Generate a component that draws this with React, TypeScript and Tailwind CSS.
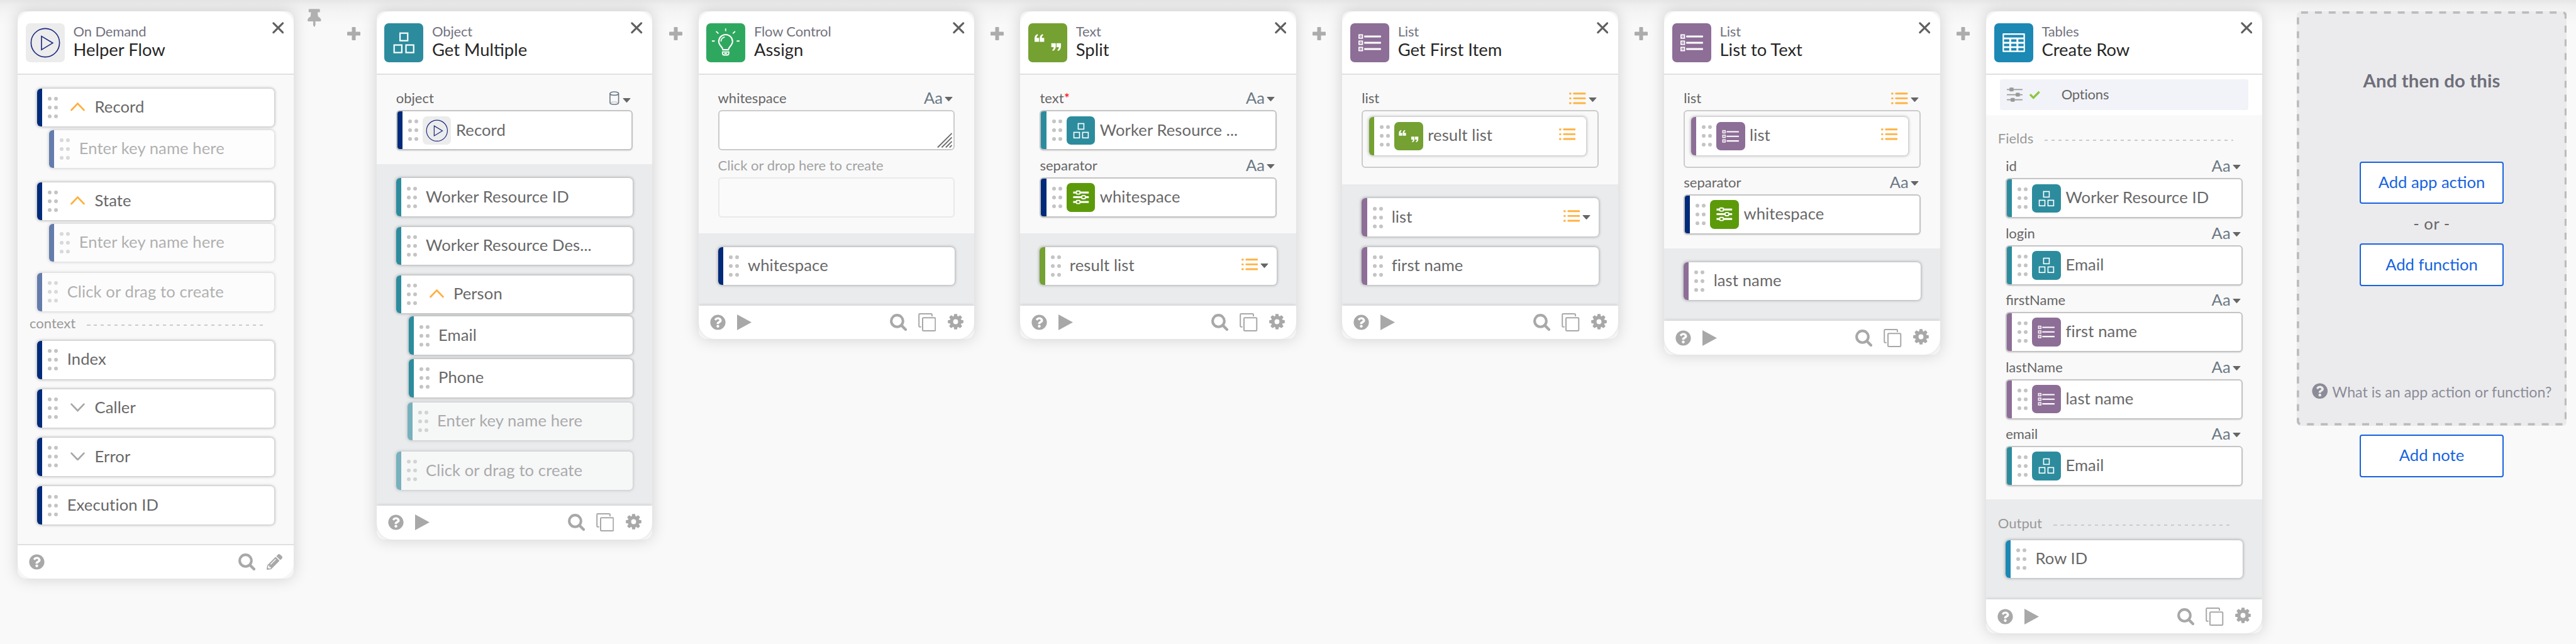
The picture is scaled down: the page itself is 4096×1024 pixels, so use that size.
import React from "react";
import { FaCheck, FaPencilAlt, FaQuestionCircle, FaThumbtack } from "react-icons/fa";

type Tone = "navy" | "teal" | "green" | "purple" | "blue";
type IconName = "play" | "cubes" | "bulb" | "quotes" | "list" | "table" | "sliders";

const barTone: Record<Tone, string> = {
  navy: "bg-[#002a7a]",
  teal: "bg-[#2c8c9e]",
  green: "bg-[#74a132]",
  purple: "bg-[#8d6e97]",
  blue: "bg-[#1c88b4]",
};

const tileTone: Record<IconName, string> = {
  play: "bg-[#ececec]",
  cubes: "bg-[#2c8c9e]",
  bulb: "bg-[#2fa85f]",
  quotes: "bg-[#74a132]",
  list: "bg-[#8d6e97]",
  table: "bg-[#1c88b4]",
  sliders: "bg-[#5c9a0a]",
};

const glyphs: Record<IconName, React.ReactNode> = {
  play: (
    <g fill="none" stroke="#1b2a80" strokeWidth="1.8">
      <circle cx="34" cy="34" r="24.8" />
      <path d="M27.4 22.6v23.6L47 34.4z" />
    </g>
  ),
  cubes: (
    <g fill="none" stroke="#fff" strokeWidth="2.4">
      <rect x="27.5" y="17.2" width="13.4" height="13.2" />
      <rect x="17.2" y="37.9" width="13.4" height="13.2" />
      <rect x="37.9" y="37.9" width="13.4" height="13.2" />
    </g>
  ),
  bulb: (
    <g fill="none" stroke="#fff" strokeWidth="2.3">
      <path d="M29 46.2c0-5-7.2-7.4-7.2-14.4a12 12 0 0 1 24 0c0 7-7.2 9.4-7.2 14.4z" />
      <path d="M25.6 31.8a8.2 8.2 0 0 1 6.6-7.8" strokeWidth="2" />
      <path d="M28.3 50h11v2.4q0 3-3 3h-5q-3 0-3-3zM31.5 52.6h4.6" strokeWidth="2" />
      <path d="M33.8 9v4.8M9.8 31h5M53 31h5M17.2 14.2l4 3.6M50.4 14.2l-4 3.6" strokeWidth="2" />
    </g>
  ),
  quotes: (
    <g fill="#fff">
      <path d="M11 32.4v-5.6q0-6.4 5.2-7.8l1 1.7q-2.5 1.6-2.7 4.9h4.3v6.8zM20 32.4v-5.6q0-6.4 5.2-7.8l1 1.7q-2.5 1.6-2.7 4.9h4.3v6.8z" />
      <path
        transform="rotate(180 34 33.6)"
        d="M11 32.4v-5.6q0-6.4 5.2-7.8l1 1.7q-2.5 1.6-2.7 4.9h4.3v6.8zM20 32.4v-5.6q0-6.4 5.2-7.8l1 1.7q-2.5 1.6-2.7 4.9h4.3v6.8z"
      />
    </g>
  ),
  list: (
    <g>
      {[23.1, 34, 44.9].map((y) => (
        <g key={y}>
          <rect x="15.3" y={y - 2.9} width="6" height="5.8" fill="none" stroke="#fff" strokeWidth="2" />
          <rect x="17.5" y={y - 0.8} width="1.6" height="1.6" fill="#fff" />
          <rect x="24.3" y={y - 1.6} width="29.3" height="3.2" rx=".8" fill="#fff" />
        </g>
      ))}
    </g>
  ),
  table: (
    <g>
      <rect x="14.5" y="17.5" width="39" height="32.7" rx="1.2" fill="#fff" />
      <g fill="#1c88b4">
        <rect x="17" y="20.2" width="33.9" height="4.6" />
        {[28, 35.7, 43.2].map((y) =>
          [17, 29.5, 42].map((x) => <rect key={`${x}-${y}`} x={x} y={y} width="9.2" height="4.4" />),
        )}
      </g>
    </g>
  ),
  sliders: (
    <g>
      {[
        [22.6, 27.4],
        [33.6, 40.2],
        [45, 27.4],
      ].map(([y, x]) => (
        <g key={y}>
          <rect x="15.5" y={y - 2.3} width="37" height="4.6" fill="#fff" />
          <rect x={x - 4.2} y={y - 3.6} width="8.4" height="7.2" rx="1.5" fill="#5c9a0a" stroke="#fff" strokeWidth="2.8" />
        </g>
      ))}
    </g>
  ),
};

function Tile({ name, big = false }: { name: IconName; big?: boolean }) {
  return (
    <div className={`shrink-0 rounded-[7px] ${tileTone[name]} ${big ? "size-[62px]" : "size-[45.6px]"}`}>
      <svg viewBox="0 0 68 68" className="size-full">
        {glyphs[name]}
      </svg>
    </div>
  );
}

function Caret({ className = "" }: { className?: string }) {
  return (
    <svg viewBox="0 0 14 8" className={`h-[7px] w-[13px] shrink-0 ${className}`}>
      <path d="M0 .6Q0 0 .8 0h12.4q.8 0 .8.6L7.6 7.6q-.6.6-1.2 0z" fill="#666" />
    </svg>
  );
}

function ListGlyph({ className = "" }: { className?: string }) {
  return (
    <svg viewBox="0 0 29 20" className={`h-[19px] w-[26.5px] shrink-0 ${className}`} fill="#ffb244">
      {[0, 8.3, 16.6].map((y) => (
        <g key={y}>
          <rect x="0" y={y} width="4" height="3.4" rx="1.6" />
          <rect x="7" y={y} width="22" height="3.2" rx="1.4" />
        </g>
      ))}
    </svg>
  );
}

function Database({ className = "" }: { className?: string }) {
  return (
    <svg viewBox="0 0 17 24" className={`h-[22px] w-[15.5px] shrink-0 ${className}`} fill="none" stroke="#6b7885" strokeWidth="1.8">
      <ellipse cx="8.5" cy="4" rx="7.5" ry="3" />
      <path d="M1 4v16q0 3 7.5 3t7.5-3V4" />
      <path d="M2.5 19.5q6-1.8 12 0" strokeWidth="1" strokeDasharray="1.5 1" />
    </svg>
  );
}

function Dots() {
  return (
    <div className="grid shrink-0 grid-cols-2 gap-x-1 gap-y-2">
      {[0, 1, 2, 3, 4, 5].map((i) => (
        <span key={i} className="size-1.5 rounded-full bg-[#c4c4c4]" />
      ))}
    </div>
  );
}

function Chevron({ up }: { up: boolean }) {
  return (
    <svg viewBox="0 0 25 15" className="mt-[-2px] ml-[20px] h-[13.7px] w-[23px] shrink-0" fill="none" strokeWidth="3" strokeLinecap="round">
      {up ? <path d="M1.6 13.2L12.5 1.8 23.4 13.2" stroke="#ffb03f" /> : <path d="M1.6 1.8L12.5 13.2 23.4 1.8" stroke="#a8a8a8" />}
    </svg>
  );
}

type ChipProps = {
  tone: Tone;
  text: string;
  icon?: IconName;
  chevron?: "up" | "down";
  ghost?: boolean;
  boxed?: boolean;
  trailing?: React.ReactNode;
  className?: string;
};

function Chip({ tone, text, icon, chevron, ghost, boxed, trailing, className = "" }: ChipProps) {
  const frame = boxed
    ? "h-[64px] border-2 border-[#c4c4c4] shadow-[0_1px_2px_rgba(0,0,0,0.12)]"
    : "h-[60.6px] shadow-[0_0_4px_1px_rgba(0,0,0,0.27)]";
  const gap = icon ? "ml-[7.5px]" : chevron ? "ml-[15px]" : "ml-[14.2px]";
  return (
    <div
      className={`flex shrink-0 items-center overflow-hidden rounded-[6px] bg-white text-[25.6px] tracking-[0.1px] text-[#686868] ${frame} ${ghost ? "opacity-60" : ""} ${className}`}
    >
      <div className={`w-[8.2px] shrink-0 self-stretch ${barTone[tone]}`} />
      <div className="ml-[9px]">
        <Dots />
      </div>
      {icon && (
        <div className="ml-[7px]">
          <Tile name={icon} />
        </div>
      )}
      {chevron && <Chevron up={chevron === "up"} />}
      <span className={`grow pb-[3.4px] whitespace-nowrap ${gap} ${ghost ? "text-[#808080]" : ""}`}>{text}</span>
      {trailing}
    </div>
  );
}

function ListMenu({ className = "" }: { className?: string }) {
  return (
    <div className={`flex items-end ${className}`}>
      <ListGlyph />
      <Caret className="mb-[4px] ml-[4px]" />
    </div>
  );
}

function FieldLabel({ text, kind, required, muted }: { text: string; kind?: "text" | "list" | "db"; required?: boolean; muted?: boolean }) {
  return (
    <div className="flex h-[42.4px] items-end pr-[3.3px] pb-[7px]">
      <span className={`grow text-[22px] leading-[24px] ${muted ? "text-[#a2a2a2]" : "text-[#666]"}`}>
        {text}
        {required && <span className="text-[#f00]">*</span>}
      </span>
      {kind === "text" && <span className="text-[25.6px] leading-[26px] text-[#6b7885]">Aa</span>}
      {kind === "list" && <ListGlyph className="mb-[2px]" />}
      {kind === "db" && <Database className="mb-[1px]" />}
      {kind && <Caret className={kind === "db" ? "mb-[5px] ml-[5.5px]" : kind === "list" ? "mb-[6px] ml-[4px]" : "mb-[7px] ml-[3px]"} />}
    </div>
  );
}

function Divider({ text, className }: { text: string; className: string }) {
  return (
    <div className={`-mx-[31px] flex shrink-0 items-start gap-[18px] pr-[46px] pl-[18.7px] ${className}`}>
      <span className="text-[22px] leading-[24px] text-[#999]">{text}</span>
      <span className="mt-[14px] h-[2px] grow bg-[repeating-linear-gradient(90deg,#cbcbcb_0_5.5px,transparent_5.5px_11px)]" />
    </div>
  );
}

function Header({ icon, app, title }: { icon: IconName; app: string; title: string }) {
  return (
    <div className="flex h-[100.5px] items-start rounded-t-[22px] border-b-2 border-[#e0e0e0] bg-white pt-[18.3px] pl-[12.8px]">
      <Tile name={icon} big />
      <div className="ml-[13.5px] grow">
        <div className="text-[22px] leading-[26px] tracking-[-0.15px] text-[#73737f]">{app}</div>
        <div className="text-[27.4px] leading-[31px] text-[#272727]">{title}</div>
      </div>
      <svg viewBox="0 0 20 20" className="-mt-[1.5px] mr-[15.8px] size-[18.5px]" stroke="#616161" strokeWidth="3.4" strokeLinecap="round">
        <path d="M2 2l16 16M18 2L2 18" />
      </svg>
    </div>
  );
}

function SearchGlyph({ className }: { className: string }) {
  return (
    <svg viewBox="0 0 29 29" className={`size-[27px] ${className}`} fill="none" stroke="#a8a8a8">
      <circle cx="12.3" cy="12.3" r="10" strokeWidth="4.4" />
      <path d="M20 20l6.8 6.8" strokeWidth="4.6" strokeLinecap="round" />
    </svg>
  );
}

function Footer({ trigger }: { trigger?: boolean }) {
  return (
    <div
      className={`flex items-center rounded-b-[26px] bg-white pr-[17.8px] pl-[18px] text-[#a8a8a8] ${
        trigger ? "h-[55px] border-t-2 border-[#e0e0e0]" : "h-[53.5px] shadow-[0_-1px_5px_rgba(0,0,0,0.14)]"
      }`}
    >
      <FaQuestionCircle className="size-[25px]" />
      {!trigger && (
        <svg viewBox="0 0 23 25" className="ml-[18px] h-[25px] w-[23px]" fill="#a8a8a8">
          <path d="M0 0l23 12.5L0 25z" />
        </svg>
      )}
      <div className="grow" />
      <SearchGlyph className="mr-[18px]" />
      {trigger ? (
        <FaPencilAlt className="size-[25px]" />
      ) : (
        <>
          <svg viewBox="0 0 31 32" className="mr-[18.5px] h-[29px] w-[28.5px]" fill="none" stroke="#a8a8a8" strokeWidth="2.2">
            <rect x="7.5" y="8" width="22.4" height="22.9" rx="1.5" />
            <path d="M5 24H2.6Q1.1 24 1.1 22.500V2.600Q1.1 1.100 2.600 1.100h19.900Q24 1.100 24 2.600V5.500" />
          </svg>
          <svg viewBox="-14 -14 28 28" className="mb-[3px] size-[25px]">
            <circle r="7.4" fill="none" stroke="#a8a8a8" strokeWidth="6" />
            {[0, 45, 90, 135, 180, 225, 270, 315].map((a) => (
              <path key={a} transform={`rotate(${a})`} d="M-3.4-9.5L-2.5-13.8h5L3.4-9.500z" fill="#a8a8a8" />
            ))}
          </svg>
        </>
      )}
    </div>
  );
}

function Card({ icon, app, title, trigger, children }: { icon: IconName; app: string; title: string; trigger?: boolean; children: React.ReactNode }) {
  return (
    <section className="mt-[18.3px] w-[438.8px] shrink-0 overflow-hidden rounded-[13px] bg-[#f6f6f6] shadow-[0_0_24px_rgba(0,0,0,0.17)]">
      <Header icon={icon} app={app} title={title} />
      {children}
      <Footer trigger={trigger} />
    </section>
  );
}

function Inputs({ className, children }: { className: string; children: React.ReactNode }) {
  return <div className={`flex flex-col bg-[#f9f9f9] px-[31px] ${className}`}>{children}</div>;
}

function Outputs({ className, children }: { className: string; children: React.ReactNode }) {
  return <div className={`flex flex-col bg-[#eaebed] px-[31px] ${className}`}>{children}</div>;
}

function PlusGlyph() {
  return (
    <svg viewBox="0 0 21 21" className="size-[21px]" fill="#acacac">
      <rect x="7.5" y="0" width="6" height="21" rx="1" />
      <rect x="0" y="7.5" width="21" height="6" rx="1" />
    </svg>
  );
}

function Connector() {
  return (
    <div className="flex w-[73.1px] shrink-0 justify-center pt-[43px]">
      <PlusGlyph />
    </div>
  );
}

function ListSlot({ children }: { children: React.ReactNode }) {
  return <div className="h-[91.4px] shrink-0 rounded-[6px] border-2 border-[#cbcbcb] pt-[8.6px] pr-[18.5px] pl-[9.5px]">{children}</div>;
}

function ActionButton({ text, className = "" }: { text: string; className?: string }) {
  return (
    <button
      className={`h-[67.6px] w-[228.5px] rounded-[4px] border-2 border-[#1663e0] bg-white pb-[3px] text-[25.6px] leading-[30px] text-[#1663e0] ${className}`}
    >
      {text}
    </button>
  );
}

export default function App() {
  return (
    <main className="flex h-[1024px] w-[4096px] items-start overflow-hidden bg-[#f9f9f9] bg-[linear-gradient(180deg,#e6e6e6_0,#efefef_8px,#f5f5f5_22px,#f9f9f9_40px)] pl-[28.3px] font-['Lato',sans-serif]">
      <Card icon="play" app="On Demand" title="Helper Flow" trigger>
        <Inputs className="h-[745.9px] pt-[22px]">
          <Chip tone="navy" text="Record" chevron="up" />
          <Chip tone="navy" text="Enter key name here" ghost className="mt-[5.2px] ml-[19px]" />
          <Chip tone="navy" text="State" chevron="up" className="mt-[22.6px]" />
          <Chip tone="navy" text="Enter key name here" ghost className="mt-[5.2px] ml-[19px]" />
          <Chip tone="navy" text="Click or drag to create" ghost className="mt-[18px]" />
          <Divider text="context" className="h-[47.2px] pt-[7.6px]" />
          <Chip tone="navy" text="Index" />
          <Chip tone="navy" text="Caller" chevron="down" className="mt-[16.5px]" />
          <Chip tone="navy" text="Error" chevron="down" className="mt-[16.5px]" />
          <Chip tone="navy" text="Execution ID" className="mt-[16.5px]" />
        </Inputs>
      </Card>

      <div className="flex w-[131.6px] shrink-0 items-start pl-[22px]">
        <FaThumbtack className="mt-[12.5px] mr-[41.5px] h-[31px] w-[21.5px] text-[#b0b0b0]" />
        <div className="pt-[43px]">
          <PlusGlyph />
        </div>
      </div>

      <Card icon="cubes" app="Object" title="Get Multiple">
        <Inputs className="h-[142.6px] pt-[14.3px]">
          <FieldLabel text="object" kind="db" />
          <Chip tone="navy" icon="play" text="Record" boxed />
        </Inputs>
        <Outputs className="h-[542.7px] pt-[22px]">
          <Chip tone="teal" text="Worker Resource ID" />
          <Chip tone="teal" text="Worker Resource Des..." className="mt-[16.6px]" />
          <Chip tone="teal" text="Person" chevron="up" className="mt-[16.4px]" />
          <Chip tone="teal" text="Email" className="mt-[5.2px] ml-[20px]" />
          <Chip tone="teal" text="Phone" className="mt-[7px] ml-[20px]" />
          <Chip tone="teal" text="Enter key name here" ghost className="mt-[8px] ml-[18px]" />
          <Chip tone="teal" text="Click or drag to create" ghost className="mt-[18px]" />
        </Outputs>
      </Card>

      <Connector />

      <Card icon="bulb" app="Flow Control" title="Assign">
        <Inputs className="h-[252.3px] pt-[14.3px]">
          <FieldLabel text="whitespace" kind="text" />
          <div className="flex h-[64px] items-end justify-end rounded-[6px] border-2 border-[#cbcbcb] bg-white p-[2px]">
            <svg viewBox="0 0 26 26" className="size-[24px]" stroke="#707070" strokeWidth="2.1">
              <path d="M1 25.5L25.5 1M8 25.5L25.5 8M15 25.5L25.5 15M21.5 25.5L25.5 21.5" />
            </svg>
          </div>
          <FieldLabel text="Click or drop here to create" muted />
          <div className="h-[64px] rounded-[6px] border-2 border-[#e9e9e9] bg-[#fafafa]" />
        </Inputs>
        <Outputs className="h-[114.7px] pt-[21.5px]">
          <Chip tone="navy" text="whitespace" />
        </Outputs>
      </Card>

      <Connector />

      <Card icon="quotes" app="Text" title="Split">
        <Inputs className="h-[252.3px] pt-[14.3px]">
          <FieldLabel text="text" kind="text" required />
          <Chip tone="teal" icon="cubes" text="Worker Resource ..." boxed />
          <FieldLabel text="separator" kind="text" />
          <Chip tone="navy" icon="sliders" text="whitespace" boxed />
        </Inputs>
        <Outputs className="h-[114.7px] pt-[21.5px]">
          <Chip tone="green" text="result list" trailing={<ListMenu className="mr-[13px] mb-[5px]" />} />
        </Outputs>
      </Card>

      <Connector />

      <Card icon="list" app="List" title="Get First Item">
        <Inputs className="h-[174.3px] pt-[14.3px]">
          <FieldLabel text="list" kind="list" />
          <ListSlot>
            <Chip tone="green" icon="quotes" text="result list" trailing={<ListGlyph className="mr-[16.5px] mb-[5px]" />} />
          </ListSlot>
        </Inputs>
        <Outputs className="h-[192.7px] pt-[22.3px]">
          <Chip tone="purple" text="list" trailing={<ListMenu className="mr-[13px] mb-[5px]" />} />
          <Chip tone="purple" text="first name" className="mt-[16.6px]" />
        </Outputs>
      </Card>

      <Connector />

      <Card icon="list" app="List" title="List to Text">
        <Inputs className="h-[276.1px] pt-[14.3px]">
          <FieldLabel text="list" kind="list" />
          <ListSlot>
            <Chip tone="purple" icon="list" text="list" trailing={<ListGlyph className="mr-[16.5px] mb-[5px]" />} />
          </ListSlot>
          <FieldLabel text="separator" kind="text" />
          <Chip tone="navy" icon="sliders" text="whitespace" boxed />
        </Inputs>
        <Outputs className="h-[115.5px] pt-[22px]">
          <Chip tone="purple" text="last name" />
        </Outputs>
      </Card>

      <Connector />

      <Card icon="table" app="Tables" title="Create Row">
        <div className="h-[64px] bg-white px-[22px] pt-[7.3px]">
          <div className="flex h-[49.4px] items-center rounded-[4px] bg-[#f2f3f8] pl-[11px]">
            <svg viewBox="0 0 27 25" className="h-[23px] w-[25px]" fill="#999">
              <path d="M0 2.7h27v1.9H0zM0 11.6h27v1.9H0zM0 20.5h27v1.9H0z" />
              <rect x="4.5" y=".4" width="7" height="6.5" rx="1" />
              <rect x="15.3" y="9.3" width="7" height="6.5" rx="1" />
              <rect x="6.5" y="18.2" width="7" height="6.5" rx="1" />
            </svg>
            <FaCheck className="ml-[11px] size-[16.5px] text-[#8dc63f]" />
            <span className="ml-[34px] pb-[2px] text-[22px] tracking-[-0.2px] text-[#666]">Options</span>
          </div>
        </div>
        <Inputs className="h-[611.2px]">
          <Divider text="Fields" className="h-[58.2px] pt-[25.6px]" />
          <FieldLabel text="id" kind="text" />
          <Chip tone="teal" icon="cubes" text="Worker Resource ID" boxed />
          <FieldLabel text="login" kind="text" />
          <Chip tone="teal" icon="cubes" text="Email" boxed />
          <FieldLabel text="firstName" kind="text" />
          <Chip tone="purple" icon="list" text="first name" boxed />
          <FieldLabel text="lastName" kind="text" />
          <Chip tone="purple" icon="list" text="last name" boxed />
          <FieldLabel text="email" kind="text" />
          <Chip tone="teal" icon="cubes" text="Email" boxed />
        </Inputs>
        <Outputs className="h-[159.4px]">
          <Divider text="Output" className="h-[64.9px] pt-[25.8px]" />
          <Chip tone="blue" text="Row ID" />
        </Outputs>
      </Card>

      <div className="mt-[18px] ml-[54.8px] flex w-[429.6px] shrink-0 flex-col items-center">
        <div className="relative flex h-[658.5px] w-full flex-col items-center rounded-[6px] bg-[#ebebed]">
          <svg className="absolute inset-0 size-full" fill="none" stroke="#bcbcbc" strokeWidth="3.7">
            <rect x="1.9" y="1.9" width="425.8" height="654.7" rx="5" strokeDasharray="10.98 10.98" />
          </svg>
          <h2 className="mt-[93px] text-[29.3px] leading-[34px] font-bold tracking-[0.15px] text-[#6f6f7a]">And then do this</h2>
          <ActionButton text="Add app action" className="mt-[111.8px]" />
          <div className="flex h-[63px] items-center pb-[1px] text-[25.6px] tracking-[0.5px] text-[#666]">- or -</div>
          <ActionButton text="Add function" />
          <div className="mt-[153.5px] flex items-center gap-[7px] text-[#8c8c98]">
            <FaQuestionCircle className="mb-[3px] size-[25.5px]" />
            <span className="text-[23.2px] leading-[30px] whitespace-nowrap">What is an app action or function?</span>
          </div>
        </div>
        <ActionButton text="Add note" className="mt-[14.5px]" />
      </div>
    </main>
  );
}
